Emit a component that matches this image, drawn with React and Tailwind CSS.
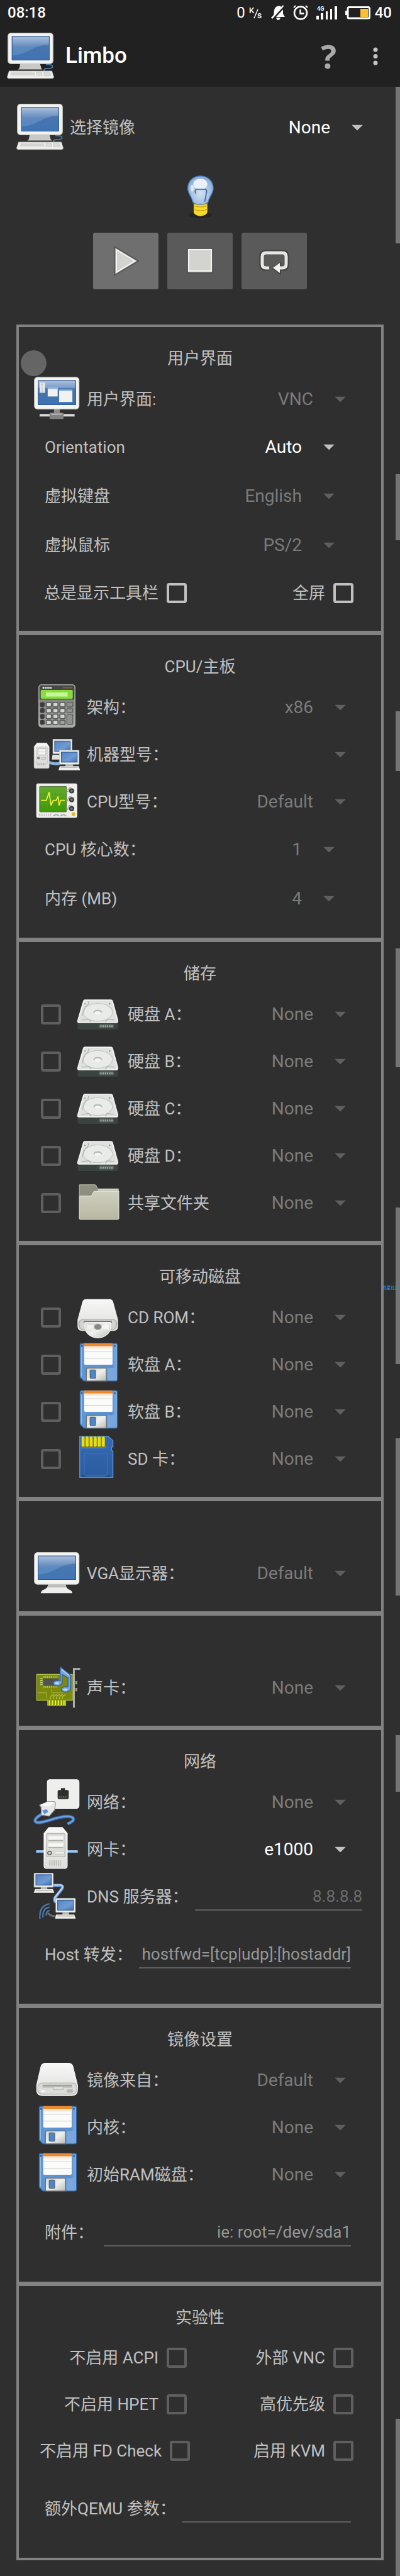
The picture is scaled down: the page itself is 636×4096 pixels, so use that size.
import React, { useState } from 'react';

// shared gradients for the device icons
const IconDefs = () => (
  <svg className="absolute size-0" aria-hidden="true">
    <defs>
      <linearGradient id="screen" x1="0" y1="0" x2="0" y2="1">
        <stop offset="0" stopColor="#a9bfdb" />
        <stop offset="0.45" stopColor="#6089bd" />
        <stop offset="1" stopColor="#4f86c6" />
      </linearGradient>
      <linearGradient id="smallScreen" x1="0" y1="0" x2="1" y2="1">
        <stop offset="0" stopColor="#5484c4" />
        <stop offset="0.6" stopColor="#6f9bd2" />
        <stop offset="1" stopColor="#3f72b4" />
      </linearGradient>
      <linearGradient id="plastic" x1="0" y1="0" x2="0" y2="1">
        <stop offset="0" stopColor="#f8f8f7" />
        <stop offset="1" stopColor="#dcddd9" />
      </linearGradient>
      <linearGradient id="metal" x1="0" y1="0" x2="1" y2="1">
        <stop offset="0" stopColor="#d3d5cf" />
        <stop offset="0.5" stopColor="#f0f0ee" />
        <stop offset="1" stopColor="#b9bcb5" />
      </linearGradient>
      <linearGradient id="floppy" x1="0" y1="0" x2="1" y2="0">
        <stop offset="0" stopColor="#5f97d6" />
        <stop offset="0.85" stopColor="#5b90cf" />
        <stop offset="1" stopColor="#7fb0e6" />
      </linearGradient>
      <linearGradient id="sd" x1="0" y1="0" x2="0" y2="1">
        <stop offset="0" stopColor="#356bb4" />
        <stop offset="1" stopColor="#2c5b9f" />
      </linearGradient>
      <linearGradient id="folder" x1="0" y1="0" x2="0" y2="1">
        <stop offset="0" stopColor="#cfcfbf" />
        <stop offset="1" stopColor="#b7b7a1" />
      </linearGradient>
      <linearGradient id="calcBody" x1="0" y1="0" x2="0" y2="1">
        <stop offset="0" stopColor="#6d706d" />
        <stop offset="1" stopColor="#a7aaa5" />
      </linearGradient>
      <linearGradient id="scope" x1="0" y1="0" x2="0" y2="1">
        <stop offset="0" stopColor="#62ab2c" />
        <stop offset="1" stopColor="#3f9a06" />
      </linearGradient>
      <radialGradient id="bulb" cx="0.5" cy="0.6" r="0.6">
        <stop offset="0" stopColor="#d6e3f3" />
        <stop offset="1" stopColor="#86abd8" />
      </radialGradient>
    </defs>
  </svg>
);

const Icon = ({ children }) => (
  <svg viewBox="0 0 128 128" className="size-[75px] shrink-0" fill="none" aria-hidden="true">
    {children}
  </svg>
);

const ComputerIcon = () => (
  <Icon>
    <path d="M36 84h54l3 12 3 4H30l4-4z" fill="#c9cac6" />
    <rect x="3" y="1" width="122" height="83" rx="8" fill="#f3f3f1" stroke="#c8cac6" strokeWidth="2" />
    <rect x="13" y="9" width="103" height="66" rx="1" fill="#2f5a94" />
    <rect x="15" y="11" width="99" height="62" fill="url(#screen)" />
    <path d="M15 73V62c40-2 55-28 99-30v41z" fill="#3465a4" opacity="0.55" />
    <path d="M106 87c10-2 18 1 18 5s-8 5-14 5-12 2-8 9" stroke="#4d7fae" strokeWidth="3" />
    <path d="M6 104h116l5 16q0 4-4 4H5q-4 0-4-4z" fill="#eeeeec" stroke="#bcbeba" strokeWidth="1.5" />
    <path d="M12 107h62l3 9H9z" fill="#d5d6d2" />
    <path d="M80 107h14l2 9H81zM100 107h16l3 10h-17z" fill="#dcddd9" stroke="#b9bbb6" />
  </Icon>
);

const MonitorIcon = () => (
  <Icon>
    <path d="M40 94h48q0 10 8 14 9 3 10 10H20q1-7 10-10 10-4 10-14z" fill="#eeeeec" />
    <path d="M40 94h48q0 5 3 9H37q3-4 3-9z" fill="#bdbebb" />
    <rect x="3" y="8" width="121" height="86" rx="8" fill="#f5f5f3" stroke="#c8cac6" strokeWidth="2" />
    <rect x="12" y="16" width="104" height="66" rx="1" fill="#2f5a94" />
    <rect x="14" y="18" width="100" height="62" fill="url(#screen)" />
    <path d="M14 80V68c42-3 55-28 100-30v42z" fill="#3465a4" opacity="0.5" />
  </Icon>
);

const DesktopIcon = () => (
  <Icon>
    <path d="M56 91h16v12H56z" fill="#8d8f8c" />
    <path d="M17 108h28M82 108h30" stroke="#d8d9d6" strokeWidth="7" />
    <rect x="44" y="101" width="38" height="17" rx="2" fill="#80827f" />
    <path d="M48 105h30" stroke="#c8c9c6" strokeWidth="3" />
    <rect x="3" y="5" width="121" height="86" rx="8" fill="#f5f5f3" stroke="#c8cac6" strokeWidth="2" />
    <rect x="12" y="13" width="104" height="67" rx="1" fill="#2f5a94" />
    <rect x="14" y="15" width="100" height="63" fill="url(#screen)" />
    <path d="M14 34h100v44H14z" fill="#3465a4" opacity="0.6" />
    <rect x="17" y="19" width="15" height="28" fill="#e4e6e8" />
    <path d="M24 19v28" stroke="#b5babf" strokeDasharray="2 2" strokeWidth="3" />
    <rect x="39" y="33" width="27" height="24" fill="#f2f2f0" />
    <path d="M39 35h27M70 40h36" stroke="#8fb3e0" strokeWidth="4" />
    <rect x="70" y="42" width="36" height="30" fill="#f2f2f0" />
  </Icon>
);

const calcKeys = [51, 67, 83, 99];

const CalculatorIcon = () => (
  <Icon>
    <rect x="15" y="3" width="98" height="115" rx="7" fill="url(#calcBody)" stroke="#b8bab6" strokeWidth="2" />
    <path d="M17 10q0-5 5-5h84q5 0 5 5v33H17z" fill="#454845" />
    <path d="M25 11h26" stroke="#d3d5d1" strokeWidth="5" strokeDasharray="4 1" />
    <path d="M81 11h24" stroke="#8a5a35" strokeWidth="4" />
    <rect x="20" y="17" width="87" height="24" rx="3" fill="#86dd3b" />
    <rect x="34" y="24" width="59" height="11" fill="#c6f59b" />
    {calcKeys.map((y) => (
      <g key={y}>
        <rect x="19" y={y} width="11" height="12" rx="3" fill="#3b3d3b" stroke="#2b2d2b" />
        <rect x="35" y={y} width="14" height="12" rx="3" fill="#d4d5d2" stroke="#5a5c5a" strokeWidth="3" />
        <rect x="53" y={y} width="14" height="12" rx="3" fill="#d4d5d2" stroke="#5a5c5a" strokeWidth="3" />
        <rect x="72" y={y} width="14" height="12" rx="3" fill={y === 99 ? '#a0a29f' : '#d4d5d2'} stroke="#5a5c5a" strokeWidth="3" />
      </g>
    ))}
    <rect x="91" y="51" width="16" height="12" rx="3" fill="#8f918e" stroke="#5a5c5a" strokeWidth="2" />
    <rect x="91" y="67" width="16" height="12" rx="3" fill="#8f918e" stroke="#5a5c5a" strokeWidth="2" />
    <rect x="91" y="83" width="16" height="28" rx="3" fill="#8f918e" stroke="#5a5c5a" strokeWidth="2" />
  </Icon>
);

const MachineIcon = () => (
  <Icon>
    <path d="M43 82q14 6 28 2v9q-14 2-28-3z" fill="#8db4e0" />
    <path d="M52 65h20v13H50z" fill="#e0e1de" />
    <rect x="53" y="23" width="52" height="39" fill="#eeeeec" stroke="#c8cac6" />
    <rect x="58" y="28" width="42" height="28" fill="url(#smallScreen)" stroke="#2f5a94" strokeWidth="2" />
    <path d="M10 33h26l7 10v55q0 4-4 4H6q-4 0-4-4V43z" fill="url(#plastic)" stroke="#c8cac6" />
    <rect x="8" y="44" width="30" height="46" rx="2" fill="#dededb" stroke="#b4b6b2" />
    <path d="M14 53h19M14 61h19" stroke="#f6f6f4" strokeWidth="5" />
    <rect x="13" y="49" width="21" height="17" stroke="#a9aba7" />
    <circle cx="14" cy="74" r="3" fill="#8d8f8c" stroke="#555" />
    <rect x="22" y="72" width="11" height="6" stroke="#a9aba7" />
    <path d="M11 91h22" stroke="#b4b6b2" strokeWidth="6" strokeDasharray="3 2" />
    <path d="M87 90h21v8H87z" fill="#b4b6b2" />
    <rect x="71" y="53" width="53" height="38" rx="1" fill="#f2f2f0" stroke="#c8cac6" />
    <rect x="76" y="58" width="43" height="27" fill="url(#smallScreen)" stroke="#2f5a94" strokeWidth="2" />
    <path d="M72 96h51l4 11H68z" fill="#eeeeec" />
    <path d="M75 99h45" stroke="#b9bbb6" strokeWidth="3" />
  </Icon>
);

const ScopeIcon = () => (
  <Icon>
    <rect x="9" y="16" width="109" height="91" rx="4" fill="#eeeeec" stroke="#fafaf9" strokeWidth="2" />
    <rect x="17" y="23" width="73" height="69" rx="2" fill="url(#scope)" stroke="#5c7a45" strokeWidth="2" />
    <path d="M20 44h68M20 78h68" stroke="#357d0a" strokeDasharray="2 8" strokeWidth="2" />
    <path d="M21 61h14l8-22 5 35 6-13h8l5-10 3 23 4-13h12" stroke="#f4ee4a" strokeWidth="3" strokeLinejoin="round" />
    {[35, 59, 83].map((y) => (
      <g key={y}>
        <path d={`M94 ${y + 3}q-1-11 9-12`} stroke="#777975" strokeWidth="2.5" strokeDasharray="3 2" />
        <circle cx="104" cy={y} r="7" fill="#3d3f3d" />
        <circle cx="104" cy={y} r="3" fill="#7a7c79" />
      </g>
    ))}
    <path d="M15 100h36" stroke="#b4b6b2" strokeWidth="6" strokeDasharray="2 3" />
    <path d="M55 103q7-7 15 0M74 103q7-7 15 0" stroke="#a2a4a0" strokeWidth="3" />
    <circle cx="109" cy="98" r="5" fill="#e0bd1c" />
  </Icon>
);

const HardDiskIcon = () => (
  <Icon>
    <path d="M9 86h110v14q0 6-6 6H15q-6 0-6-6z" fill="#39433f" />
    <path d="M29 26h70q4 0 5 4l14 51q1 6-5 6H14q-6 0-4-6l15-51q1-4 4-4z" fill="#dfe1de" stroke="#f5f5f4" strokeWidth="3" />
    <ellipse cx="64" cy="59" rx="40" ry="24" fill="#e9ebe9" stroke="#c3c8c5" strokeWidth="2" />
    <path d="M38 30q3 8-8 15l-9 24M20 80l20-2 6 8M108 80l-18-2-6 8" stroke="#aeb4b1" strokeWidth="2" />
    <path d="M54 60c0-8 20-8 20 0" stroke="#b7bdb9" strokeWidth="4" />
    <ellipse cx="64" cy="61" rx="8" ry="3" fill="#f7f7f6" />
    <circle cx="96" cy="36" r="2.5" fill="#9aa09d" />
    <circle cx="29" cy="36" r="2" fill="#9aa09d" />
    <rect x="66" y="91" width="42" height="11" rx="5" fill="#56605b" />
    <path d="M71 97h34" stroke="#a9b0ac" strokeWidth="5" strokeDasharray="3 3" />
  </Icon>
);

const FolderIcon = () => (
  <Icon>
    <path d="M14 15h42q3 0 4 3l4 8h56v20H14z" fill="#8e8f7f" stroke="#c9cabc" strokeWidth="1.5" />
    <path d="M64 29h55" stroke="#d8d8ce" strokeWidth="4" />
    <path d="M14 48q0-2 3-2h27q3 0 4-3l4-7q1-3 4-3h65v73q0 3-3 3H17q-3 0-3-3z" fill="url(#folder)" stroke="#e0e0d4" strokeWidth="2" />
  </Icon>
);

const CdRomIcon = () => (
  <Icon>
    <path d="M32 15h64q8 0 10 8l13 48v18q0 12-14 12H23Q9 101 9 89V71l13-48q2-8 10-8z" fill="url(#plastic)" />
    <path d="M13 82q0-12 12-12h78q12 0 12 12 0 16-14 16H27q-14 0-14-16z" fill="#d3d5d1" stroke="#a0a39e" strokeWidth="2" />
    <path d="M26 74h76v6H26z" fill="#6d706c" />
    <path d="M29 78h70v12a35 30 0 0 1-70 0z" fill="url(#metal)" stroke="#f7f7f7" strokeWidth="2" />
    <path d="M64 90l-30-8v16zM64 90l30-6v16z" fill="#fff" opacity="0.5" />
    <ellipse cx="64" cy="90" rx="10" ry="8" fill="#868886" stroke="#b5b7b4" strokeWidth="2" />
  </Icon>
);

const FloppyIcon = () => (
  <Icon>
    <path d="M20 7h93q4 0 4 4v94q0 4-4 4H26l-10-10V11q0-4 4-4z" fill="url(#floppy)" stroke="#35659f" strokeWidth="2" />
    <path d="M19 16v81" stroke="#a5c8ef" strokeWidth="2" />
    <path d="M27 7h77v8H27z" fill="#f08a2c" />
    <path d="M27 15h77v47q0 3-3 3H30q-3 0-3-3z" fill="#fbfbfa" />
    <path d="M28 29h75M28 47h75" stroke="#d3d3d0" strokeWidth="2" />
    <path d="M28 19h75" stroke="#fbe6cf" strokeWidth="5" />
    <rect x="90" y="74" width="20" height="34" fill="#7ba7de" />
    <path d="M33 109V77q0-3 3-3h48q3 0 3 3v32z" fill="url(#metal)" stroke="#6a6c63" strokeWidth="2" />
    <rect x="43" y="79" width="15" height="23" rx="2" fill="#4d86c8" stroke="#55606a" strokeWidth="2" />
    <path d="M19 12h4v4h-4zM108 12h4v4h-4z" fill="#2c5b9f" />
  </Icon>
);

const SdCardIcon = () => (
  <Icon>
    <path d="M15 3h77l13 12v17h-4v8l4 4v71H15z" fill="url(#sd)" stroke="#5a8fd3" strokeWidth="2.5" />
    <path d="M20 4h64v25q0 5-5 5H20z" fill="#7a7f1c" />
    {[20, 31, 42, 53, 64, 75].map((x) => (
      <rect key={x} x={x} y="4" width="8" height="27" rx="3" fill="#e6dc1e" />
    ))}
    <path d="M18 35h62q6 0 7-6" stroke="#5a8fd3" strokeWidth="2" />
    <rect x="27" y="49" width="63" height="60" rx="2" stroke="#3f74bb" strokeWidth="2" />
    <path d="M21 113l5-4 5 4M86 113l5-4 5 4" stroke="#1d437c" strokeWidth="2" />
  </Icon>
);

const SoundCardIcon = () => (
  <Icon>
    <path d="M9 28h97v70H88v14H39V98H9z" fill="#7c8a0b" stroke="#b5c24e" strokeWidth="2" />
    <path d="M12 78h24v14M50 66v12h30l14-8" stroke="#a0ad3a" strokeWidth="2" />
    <rect x="27" y="39" width="42" height="20" fill="#4e5452" />
    <path d="M28 35h40M28 62h40" stroke="#c7cf8e" strokeWidth="5" strokeDasharray="2 3" />
    <path d="M22 39v20" stroke="#e2e6b7" strokeWidth="6" strokeDasharray="2 3" />
    <path d="M46 96q0-12 10-13M54 96q0-12 10-13M62 96q0-12 10-13M70 96q0-12 10-13M78 96q0-12 10-13" stroke="#b8c545" strokeWidth="2" />
    <path d="M44 98v13M52 98v13M60 98v13M68 98v13M76 98v13M83 98v13" stroke="#e6f02e" strokeWidth="4" />
    <path d="M110 118V13h17" stroke="#b3b4b1" strokeWidth="5" />
    <path d="M114 46h5v9h-5zM114 65h5v9h-5z" fill="#9fa19d" />
    <path d="M73 8l28 22v38q-3 8-15 8-11-1-10-8 2-8 18-6V37L78 28v24q-3 7-15 7-10-1-9-8 3-8 19-6z" fill="#76a4dc" stroke="#3465a4" strokeWidth="2.5" strokeLinejoin="round" />
    <path d="M76 14l21 17" stroke="#b8d2f0" strokeWidth="3" />
    <ellipse cx="64" cy="52" rx="6" ry="3" fill="#bcd6f3" />
    <ellipse cx="87" cy="69" rx="6" ry="3" fill="#bcd6f3" />
  </Icon>
);

const WallJackIcon = () => (
  <Icon>
    <rect x="38" y="3" width="86" height="78" rx="7" fill="#eeeeec" stroke="#fafaf9" strokeWidth="2" />
    <path d="M66 35q0-4 4-4h5v-5h11v5h6q4 0 4 4v17q0 4-4 4H70q-4 0-4-4z" fill="#2c2f2c" />
    <path d="M70 50h22" stroke="#6f6a2a" strokeWidth="5" strokeDasharray="3 2" />
    <path d="M35 89C20 98 2 108 5 116c5 8 24 1 42-4 22-7 48-12 58-7 8 5 4 11-12 18" stroke="#35659f" strokeWidth="9" />
    <path d="M35 89C20 98 2 108 5 116c5 8 24 1 42-4 22-7 48-12 58-7 8 5 4 11-12 18" stroke="#6a9fe0" strokeWidth="5" />
    <path d="M17 72l22-9h19l2 4-2 18-15 17-21-3-1-21z" fill="#e6e6e3" stroke="#8f918d" strokeWidth="2" />
    <path d="M17 72l22-9h19l-15 13z" fill="#fafaf9" />
    <path d="M24 86l13-3 3 8-10 6z" fill="#5f95d8" />
  </Icon>
);

const ServerIcon = () => (
  <Icon>
    <path d="M7 70h114" stroke="#7da6d3" strokeWidth="7" />
    <path d="M10 69h108" stroke="#c0d8f1" strokeWidth="3" />
    <path d="M42 5h37l13 16v88q0 7-7 7H36q-7 0-7-7V21z" fill="url(#plastic)" stroke="#fafaf9" strokeWidth="2" />
    <rect x="36" y="21" width="50" height="63" rx="4" fill="#dcddd9" stroke="#aeb0ac" strokeWidth="2" />
    <path d="M41 33h40M41 52h40" stroke="#f6f6f4" strokeWidth="10" />
    <path d="M41 40h40M41 59h40" stroke="#aeb0ac" strokeWidth="2" />
    <circle cx="44" cy="74" r="5" fill="#d3d5cf" stroke="#5d5f5c" strokeWidth="2.5" />
    <rect x="57" y="70" width="27" height="7" rx="2" fill="#efefed" stroke="#b4b6b2" />
    <path d="M43 101h32" stroke="#bcbeba" strokeWidth="15" strokeDasharray="3 3" />
  </Icon>
);

const DnsIcon = () => (
  <Icon>
    <path d="M55 34h20q7 2 3 9L59 67q-4 8 3 13" stroke="#6c9bd2" strokeWidth="8" />
    <path d="M55 33h20q7 2 3 9L59 66q-4 8 3 13" stroke="#b8d4f2" strokeWidth="4" />
    <path d="M20 38h18v7H20z" fill="#b4b6b2" />
    <rect x="2" y="1" width="52" height="38" rx="1" fill="#eeeeec" stroke="#c8cac6" />
    <rect x="7" y="5" width="42" height="28" fill="url(#smallScreen)" stroke="#2f5a94" strokeWidth="2" />
    <path d="M5 44h48l4 10H1z" fill="#eeeeec" />
    <path d="M7 48h44" stroke="#b9bbb6" strokeWidth="3" />
    <path d="M40 108q4 9 21 10" stroke="#6a6c69" strokeWidth="5" />
    <path d="M44 84Q15 88 18 125M44 93q-20 2-18 28M44 102q-10 2-9 14" stroke="#4d7fb4" strokeWidth="3.5" />
    <path d="M79 107h18v7H79z" fill="#b4b6b2" />
    <rect x="61" y="69" width="53" height="38" rx="1" fill="#eeeeec" stroke="#c8cac6" />
    <rect x="66" y="74" width="43" height="27" fill="url(#smallScreen)" stroke="#2f5a94" strokeWidth="2" />
    <path d="M62 113h49l4 11H59z" fill="#eeeeec" />
    <path d="M65 117h44" stroke="#b9bbb6" strokeWidth="3" />
  </Icon>
);

const DriveIcon = () => (
  <Icon>
    <path d="M34 18h60q10 0 13 8l13 52v12q0 16-16 16H25q-16 0-16-16V78l12-52q3-8 13-8z" fill="url(#plastic)" stroke="#fafaf9" strokeWidth="2" />
    <path d="M12 86q0-14 13-14h80q13 0 13 14 0 16-15 16H27q-15 0-15-16z" fill="#dcddd9" stroke="#b4b6b2" strokeWidth="2" />
    <path d="M25 79h80" stroke="#a0a29e" strokeWidth="5" />
    <path d="M25 84h30v6h26v-6h24" stroke="#b9bbb6" strokeWidth="2" />
    <rect x="90" y="89" width="18" height="9" rx="4" fill="#b4b6b2" />
    <rect x="20" y="91" width="12" height="6" rx="3" fill="#f6f6f4" />
  </Icon>
);

const BulbIcon = () => (
  <Icon>
    <ellipse cx="64" cy="116" rx="32" ry="8" fill="#202020" opacity="0.7" />
    <path d="M46 82h37v25q0 9-19 12-18-3-18-12z" fill="#f5da2b" />
    <path d="M46 91q18 6 37 0M46 101q18 6 37 0" stroke="#c9a410" strokeWidth="2" />
    <path d="M64 10c22 0 35 16 35 33 0 15-10 21-14 38q-3 6-21 6-17 0-20-6c-4-17-14-23-14-38 0-17 13-33 34-33z" fill="url(#bulb)" stroke="#4a7ab8" strokeWidth="2.5" />
    <ellipse cx="64" cy="32" rx="19" ry="15" fill="#eaf1fa" />
    <ellipse cx="42" cy="43" rx="4" ry="9" fill="#e3edf8" />
    <path d="M52 58q-6-13 6-12h14q11-2 9 8l-5 26" stroke="#3f6ba6" strokeWidth="3" />
  </Icon>
);

const StatusBar = () => (
  <div className="flex h-10 items-center justify-between pr-[13px] pl-3 text-2xl font-medium">
    <span>08:18</span>
    <div className="flex items-center gap-[13px]">
      <div className="flex items-center gap-[6px]">
        <span className="font-normal">0</span>
        <svg viewBox="0 0 22 24" className="h-6 w-[22px] overflow-visible" fill="#fff">
          <text x="0" y="13" fontSize="13" fontWeight="500">K</text>
          <path d="M14 7l-6 14" stroke="#fff" strokeWidth="1.5" />
          <text x="13" y="21" fontSize="14" fontWeight="500">s</text>
        </svg>
      </div>
      <svg viewBox="0 0 22 24" className="h-6 w-[22px]" fill="#fff">
        <path d="M4 16c1-3 0-9 3-12 3-3 7-3 9-1l3-3 1 2L2 22l-2-2z" />
        <path d="M19 7v7l3 5H8zM8 20h7q-1 4-4 4-2 0-3-4z" />
      </svg>
      <svg viewBox="0 0 24 24" className="size-6" fill="none" stroke="#fff">
        <circle cx="12" cy="12.5" r="10" strokeWidth="2.6" />
        <path d="M11.5 7v6.5h6" strokeWidth="2.4" />
        <path d="M1 4l3-3M23 4l-3-3" strokeWidth="2" />
      </svg>
      <svg viewBox="0 0 33 24" className="h-6 w-[33px] overflow-visible" fill="#fff">
        <text x="1" y="9" fontSize="9" fontWeight="700">4G</text>
        <path d="M0 17h4v6H0zM7 13h4v10H7zM15 10h3v13h-3zM22 6h3v17h-3zM29 2h4v21h-4z" />
      </svg>
      <div className="flex items-center gap-[7px]">
        <svg viewBox="0 0 40 24" className="h-6 w-10" fill="none">
          <rect x="4" y="3.5" width="34.5" height="17.5" rx="2" stroke="#fff" strokeWidth="3" />
          <path d="M0 9h3v7H0z" fill="#fff" />
          <path d="M24 6h12v13H24z" fill="#fbc02d" />
        </svg>
        <span>40</span>
      </div>
    </div>
  </div>
);

const Arrow = ({ enabled }) => (
  <svg viewBox="0 0 18 9" className="pointer-events-none absolute top-1/2 right-[33px] h-[9px] w-[18px] -translate-y-1/2">
    <path d="M0 0h18L9 9z" fill={enabled ? '#c1c1c1' : '#5f5f5f'} />
  </svg>
);

const Dropdown = ({ id, value, enabled }) => (
  <div className="relative flex-1">
    <select
      id={id}
      disabled={!enabled}
      className="h-14 w-full appearance-none bg-transparent pr-[85px] text-[28px] text-white [text-align-last:right] disabled:text-[#7b7b7b] disabled:opacity-100"
    >
      <option>{value}</option>
    </select>
    <Arrow enabled={enabled} />
  </div>
);

const Section = ({ title, children }) => (
  <section className="-mt-px border-4 border-[#828282] px-[23px] py-[23px]">
    <h2 className="flex h-[54px] items-center justify-center">{title}</h2>
    {children}
  </section>
);

const IconRow = ({ id, icon, label, value, enabled, children }) => (
  <div className="flex h-[75px] items-center gap-[10px]">
    {icon}
    <label htmlFor={id} className="whitespace-nowrap">{label}</label>
    {children || <Dropdown id={id} value={value} enabled={enabled} />}
  </div>
);

const PlainRow = ({ id, label, value, enabled }) => (
  <div className="flex h-[78px] items-center px-[18px]">
    <label htmlFor={id} className="whitespace-nowrap">{label}</label>
    <Dropdown id={id} value={value} enabled={enabled} />
  </div>
);

const checkboxStyle =
  'size-8 shrink-0 appearance-none rounded-[4px] border-4 border-[#c1c1c1] checked:bg-[#c1c1c1] disabled:border-[#5f5f5f]';

const DiskRow = ({ id, icon, label }) => (
  <div className="flex items-center pl-3">
    <input type="checkbox" disabled aria-label={label} className={`${checkboxStyle} mr-[21px]`} />
    <div className="flex-1">
      <IconRow id={id} icon={icon} label={label} value="None" />
    </div>
  </div>
);

const Check = ({ label, enabled }) => {
  const [checked, setChecked] = useState(false);

  return (
    <label className="flex min-w-[234px] items-center justify-end gap-[13px] whitespace-nowrap">
      {label}
      <input
        type="checkbox"
        checked={checked}
        disabled={!enabled}
        onChange={(e) => setChecked(e.target.checked)}
        className={checkboxStyle}
      />
    </label>
  );
};

const CheckRow = ({ left, right, enabled }) => (
  <div className="flex h-[74px] items-center justify-between pr-[21px] pl-[10px]">
    <Check label={left} enabled={enabled} />
    <Check label={right} enabled={enabled} />
  </div>
);

const fieldStyle = 'h-11 w-0 flex-1 border-b-2 border-[#5f5f5f] bg-transparent text-right outline-none';

const FieldRow = ({ id, label, placeholder }) => (
  <div className="flex h-[110px] items-center gap-[10px] pr-[25px] pl-[18px]">
    <label htmlFor={id} className="whitespace-nowrap">{label}</label>
    <input id={id} type="text" placeholder={placeholder} className={`${fieldStyle} placeholder:text-[#979797]`} />
  </div>
);

const Thumbs = () => (
  <div className="absolute top-0 right-0 w-[7px]">
    <div className="mt-[138px] h-[249px] bg-[#757575]"></div>
    <div className="mt-[367px] h-[105px] bg-[#757575]"></div>
    <div className="mt-[272px] h-[95px] bg-[#757575]"></div>
    <div className="mt-[282px] h-[189px] bg-[#757575]"></div>
    <div className="mt-[223px] h-[249px] bg-[#757575]"></div>
    <div className="mt-[118px] h-[250px] bg-[#757575]"></div>
    <div className="mt-[222px] h-[90px] bg-[#757575]"></div>
    <div className="mt-[997px] h-[250px] bg-[#757575]"></div>
  </div>
);

const App = () => {
  return (
    <div className="relative min-h-screen overflow-hidden bg-[#2f2f2f] font-[Roboto,'Noto_Sans_CJK_SC',sans-serif] text-[26px] leading-9 text-[#c1c1c1]">
      <IconDefs />
      <header className="bg-[#212121] text-white">
        <StatusBar />
        <div className="flex h-[98px] items-center pr-[22px] pl-[11px]">
          <ComputerIcon />
          <h1 className="ml-[18px] flex-1 text-[35px] font-medium">Limbo</h1>
          <button type="button" aria-label="Help" className="font-['Open_Sans',sans-serif] text-[52px] leading-none font-bold text-[#a9a9a9]">
            ?
          </button>
          <button type="button" aria-label="More options" className="ml-[45px]">
            <svg viewBox="0 0 34 34" className="size-[34px]" fill="#c4c4c4">
              <circle cx="17" cy="7" r="3.5" />
              <circle cx="17" cy="17.5" r="3.5" />
              <circle cx="17" cy="28" r="3.5" />
            </svg>
          </button>
        </div>
      </header>

      <main className="px-[26px] pt-[27px] pb-[27px]">
        <IconRow id="machine" icon={<ComputerIcon />} label="选择镜像" value="None" enabled />

        <div className="mt-[34px] flex justify-center">
          <BulbIcon />
        </div>

        <div className="mt-[21px] flex justify-center gap-[14px]">
          <button type="button" aria-label="Start" className="flex h-[90px] w-[104px] items-center justify-center rounded-[3px] bg-[#6f6f6f]">
            <svg viewBox="0 0 64 64" className="size-16">
              <path d="M14 9v46l38-23z" fill="#9a9a98" stroke="#50514f" strokeWidth="1.5" />
              <path d="M17 14v36l30-18z" fill="#d3d4d0" stroke="#f5f5f4" strokeWidth="2" />
            </svg>
          </button>
          <button type="button" aria-label="Stop" className="flex h-[90px] w-[104px] items-center justify-center rounded-[3px] bg-[#5a5a5b]">
            <svg viewBox="0 0 64 64" className="size-16">
              <rect x="12" y="12" width="40" height="39" rx="2" fill="#868785" stroke="#454644" />
              <rect x="14" y="14" width="36" height="34" fill="#d3d4d0" stroke="#f5f5f4" strokeWidth="2" />
            </svg>
          </button>
          <button type="button" aria-label="Restart" className="flex h-[90px] w-[104px] items-center justify-center rounded-[3px] bg-[#5a5a5b]">
            <svg viewBox="0 0 64 64" className="size-16" fill="none">
              <path d="M24 44h-5q-7 0-7-7v-12q0-7 7-7h26q7 0 7 7v12q0 7-7 7h-3" stroke="#464745" strokeWidth="8" />
              <path d="M43 33L28 44l15 11z" fill="#464745" />
              <path d="M24 43h-5q-6 0-6-6v-12q0-6 6-6h26q6 0 6 6v12q0 6-6 6h-4" stroke="#e6e6e4" strokeWidth="5" />
              <path d="M41 35L30 43l11 8z" fill="#f2f2f0" />
            </svg>
          </button>
        </div>

        <div className="mt-[57px]">
          <Section title="用户界面">
            <IconRow id="ui" icon={<DesktopIcon />} label="用户界面:" value="VNC" />
            <PlainRow id="orientation" label="Orientation" value="Auto" enabled />
            <PlainRow id="keyboard" label="虚拟键盘" value="English" />
            <PlainRow id="mouse" label="虚拟鼠标" value="PS/2" />
            <CheckRow left="总是显示工具栏" right="全屏" enabled />
          </Section>

          <Section title="CPU/主板">
            <IconRow id="arch" icon={<CalculatorIcon />} label="架构：" value="x86" />
            <IconRow id="machine-type" icon={<MachineIcon />} label="机器型号：" value="" />
            <IconRow id="cpu" icon={<ScopeIcon />} label="CPU型号：" value="Default" />
            <PlainRow id="cores" label="CPU 核心数：" value="1" />
            <PlainRow id="memory" label="内存 (MB)" value="4" />
          </Section>

          <Section title="储存">
            <DiskRow id="hda" icon={<HardDiskIcon />} label="硬盘 A：" />
            <DiskRow id="hdb" icon={<HardDiskIcon />} label="硬盘 B：" />
            <DiskRow id="hdc" icon={<HardDiskIcon />} label="硬盘 C：" />
            <DiskRow id="hdd" icon={<HardDiskIcon />} label="硬盘 D：" />
            <DiskRow id="shared" icon={<FolderIcon />} label="共享文件夹" />
          </Section>

          <Section title="可移动磁盘">
            <DiskRow id="cdrom" icon={<CdRomIcon />} label="CD ROM：" />
            <DiskRow id="fda" icon={<FloppyIcon />} label="软盘 A：" />
            <DiskRow id="fdb" icon={<FloppyIcon />} label="软盘 B：" />
            <DiskRow id="sdcard" icon={<SdCardIcon />} label="SD 卡：" />
          </Section>

          <Section>
            <IconRow id="vga" icon={<MonitorIcon />} label="VGA显示器：" value="Default" />
          </Section>

          <Section>
            <IconRow id="sound" icon={<SoundCardIcon />} label="声卡：" value="None" />
          </Section>

          <Section title="网络">
            <IconRow id="network" icon={<WallJackIcon />} label="网络：" value="None" />
            <IconRow id="nic" icon={<ServerIcon />} label="网卡：" value="e1000" enabled />
            <IconRow id="dns" icon={<DnsIcon />} label="DNS 服务器：">
              <input id="dns" type="text" placeholder="8.8.8.8" className={`${fieldStyle} mr-[7px] placeholder:text-[#6c6c6c]`} />
            </IconRow>
            <FieldRow id="hostfwd" label="Host 转发：" placeholder="hostfwd=[tcp|udp]:[hostaddr]" />
          </Section>

          <Section title="镜像设置">
            <IconRow id="boot" icon={<DriveIcon />} label="镜像来自：" value="Default" />
            <IconRow id="kernel" icon={<FloppyIcon />} label="内核：" value="None" />
            <IconRow id="initrd" icon={<FloppyIcon />} label="初始RAM磁盘：" value="None" />
            <FieldRow id="append" label={'附件：\u00a0'} placeholder="ie: root=/dev/sda1" />
          </Section>

          <Section title="实验性">
            <CheckRow left="不启用 ACPI" right="外部 VNC" />
            <CheckRow left="不启用 HPET" right="高优先级" />
            <CheckRow left="不启用 FD Check" right="启用 KVM" />
            <FieldRow id="extra" label="额外QEMU 参数：" />
          </Section>
        </div>
      </main>

      <Thumbs />
      {/* floating touch ball */}
      <div className="absolute top-[557px] left-[33px] size-[41px] rounded-full bg-[#656565]"></div>
      <span className="absolute top-[2044px] right-0 w-[29px] overflow-hidden text-[7px] leading-[9px] whitespace-nowrap text-[#2b93d6]">流星社区</span>
    </div>
  );
};

export default App;
